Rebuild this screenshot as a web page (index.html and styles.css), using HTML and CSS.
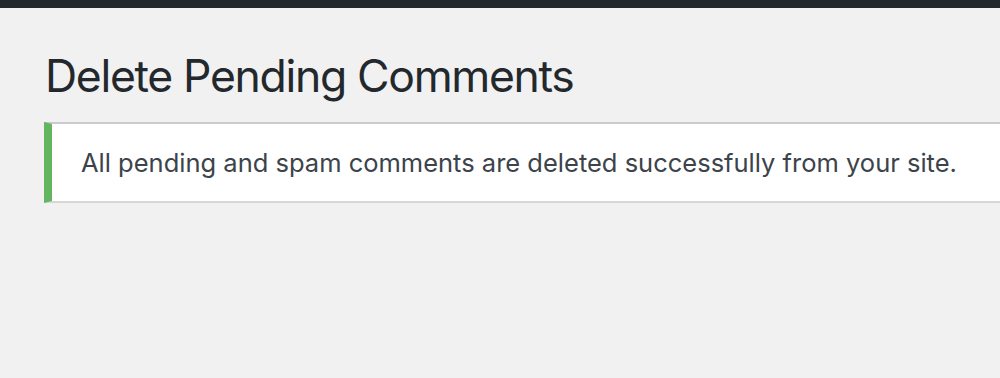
FILE: index.html
```html
<!DOCTYPE html>
<html lang="en">
<head>
<meta charset="utf-8">
<title>Delete Pending Comments</title>
<link rel="stylesheet" href="styles.css">
</head>
<body>
<div class="adminbar"></div>
<main class="wrap">
  <h1 class="title">Delete Pending Comments</h1>
  <div class="notice">
    <p>All pending and spam comments are deleted successfully from your site.</p>
  </div>
</main>
</body>
</html>
```
FILE: styles.css
```css
html, body {
  margin: 0;
  padding: 0;
  background: #f1f1f1;
  overflow: hidden;
}
body {
  font-family: Inter, "Noto Sans", "Liberation Sans", sans-serif;
  width: 1000px;
  height: 378px;
}
.adminbar {
  height: 8px;
  background: #23282d;
}
.wrap {
  padding: 0 0 0 44px;
}
.title {
  margin: 0;
  padding: 38px 0 0 1px;
  font-size: 44.5px;
  font-weight: 400;
  line-height: 60px;
  color: #23282d;
  letter-spacing: -1.32px;
}
.notice {
  margin-top: 16px;
  width: 1000px;
  background: #fff;
  border-top: 2px solid #c9cbce;
  border-bottom: 2px solid #d5d6d8;
  border-left: 8px solid #64b560;
  padding: 0 0 0 29px;
  box-sizing: border-box;
}
.notice p {
  margin: 0;
  height: 77px;
  display: flex;
  align-items: center;
  font-size: 25.5px;
  color: #3c434a;
}
```
